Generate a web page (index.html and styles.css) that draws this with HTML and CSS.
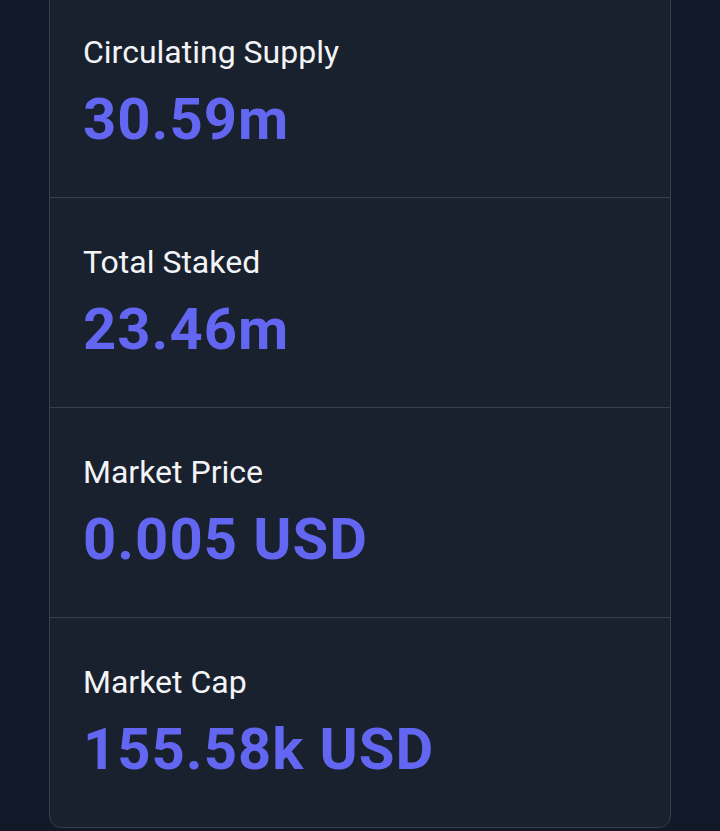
FILE: index.html
```html
<!DOCTYPE html>
<html lang="en">
<head>
<meta charset="utf-8">
<title>Token Stats</title>
<link rel="stylesheet" href="styles.css">
</head>
<body>
  <main class="page">
    <section class="card">
      <div class="stat">
        <div class="label">Circulating Supply</div>
        <div class="value">30.59m</div>
      </div>
      <div class="stat">
        <div class="label">Total Staked</div>
        <div class="value">23.46m</div>
      </div>
      <div class="stat">
        <div class="label">Market Price</div>
        <div class="value">0.005 USD</div>
      </div>
      <div class="stat">
        <div class="label">Market Cap</div>
        <div class="value">155.58k USD</div>
      </div>
    </section>
  </main>
</body>
</html>
```
FILE: styles.css
```css
html, body {
  margin: 0;
  padding: 0;
  background: #111827;
}
body {
  font-family: Roboto, "Liberation Sans", sans-serif;
  height: 831px;
  overflow: hidden;
}
.page {
  padding-left: 49px;
  width: 622px;
}
.card {
  margin-top: -13px;
  background: #19212f;
  border: 1px solid #363f4e;
  border-radius: 12px;
}
.stat {
  box-sizing: border-box;
  height: 210px;
  padding: 44px 33px 0;
  border-bottom: 1px solid #363f4e;
}
.stat:last-child {
  height: 209px;
  border-bottom: none;
}
.label {
  font-size: 32px;
  line-height: 40px;
  font-weight: 400;
  color: #f3f4f6;
  margin-bottom: 18px;
}
.value {
  font-size: 58px;
  line-height: 58px;
  font-weight: 700;
  letter-spacing: 1px;
  color: #6366f1;
}
```
